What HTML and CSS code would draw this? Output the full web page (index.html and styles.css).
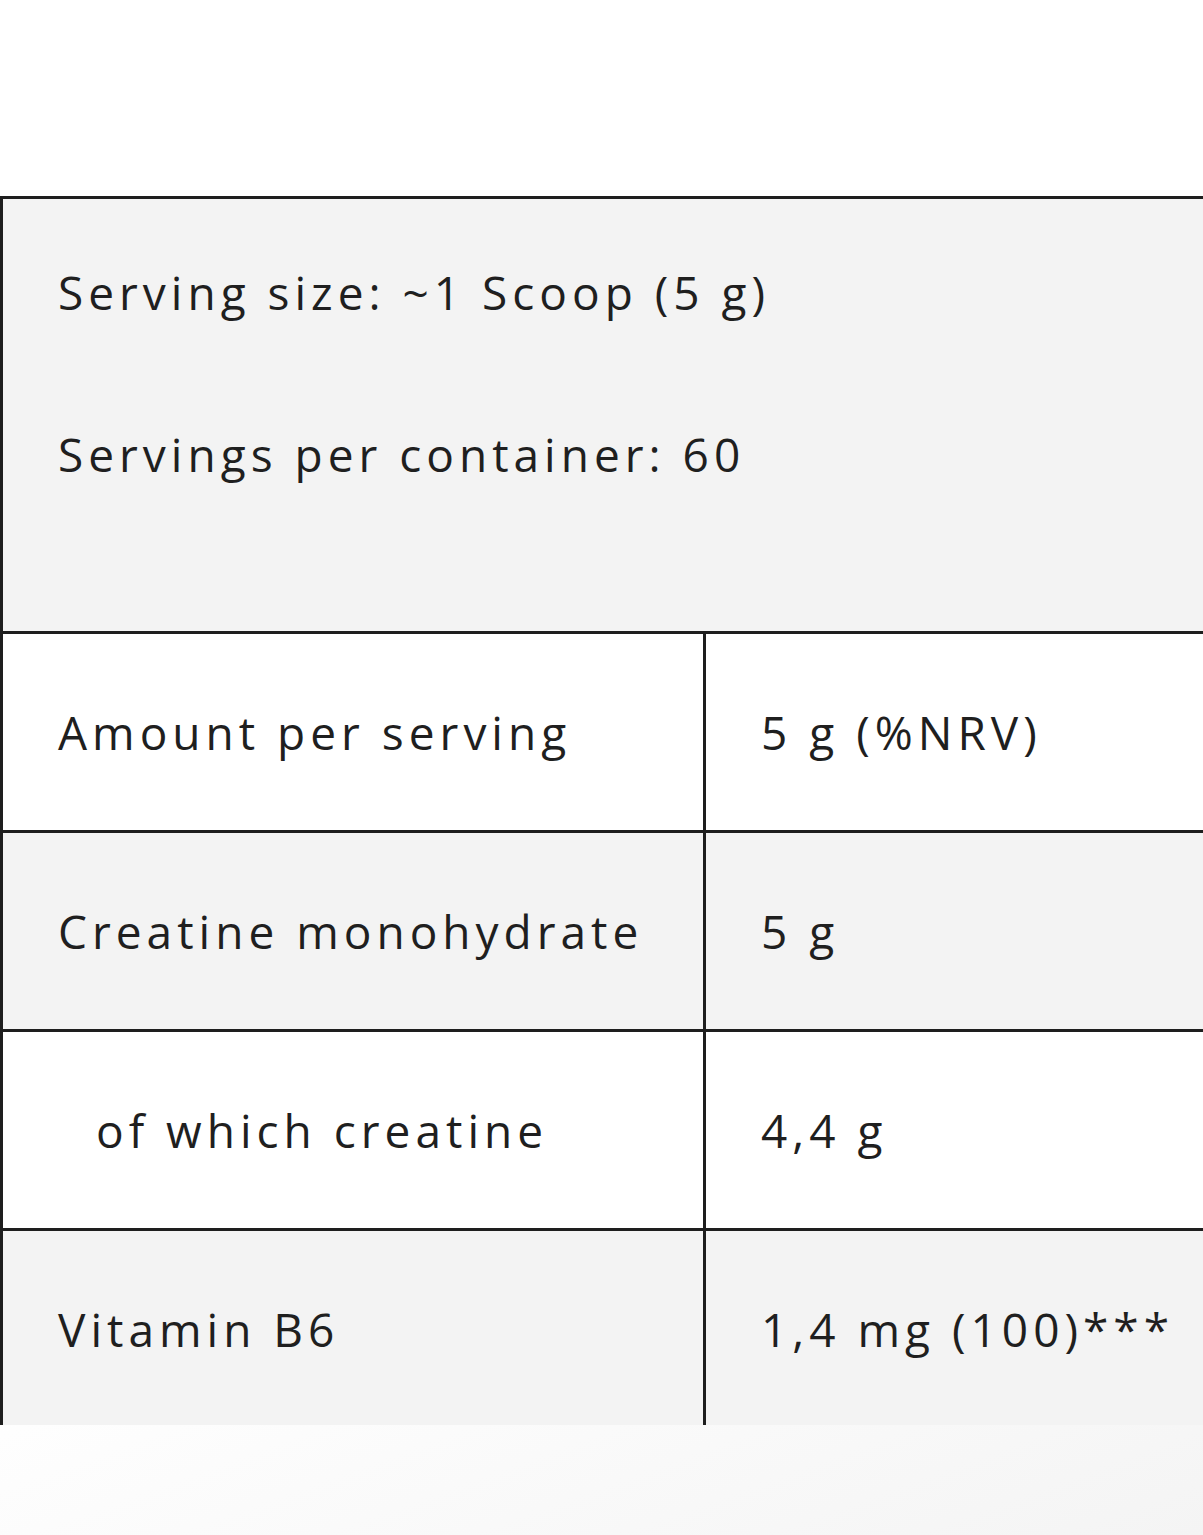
FILE: index.html
```html
<!DOCTYPE html>
<html>
<head>
<meta charset="utf-8">
<link rel="stylesheet" href="styles.css">
</head>
<body>
<div class="page">
  <div class="clip">
    <table class="facts">
      <colgroup><col class="c1"><col class="c2"></colgroup>
      <tr class="head">
        <td colspan="2">
          <p>Serving size: ~1 Scoop (5 g)</p>
          <p>Servings per container: 60</p>
        </td>
      </tr>
      <tr class="row white">
        <td>Amount per serving</td>
        <td>5 g (%NRV)</td>
      </tr>
      <tr class="row grey">
        <td>Creatine monohydrate</td>
        <td>5 g</td>
      </tr>
      <tr class="row white">
        <td class="indent">of which creatine</td>
        <td>4,4 g</td>
      </tr>
      <tr class="row grey">
        <td>Vitamin B6</td>
        <td>1,4 mg (100)***</td>
      </tr>
    </table>
  </div>
</div>
</body>
</html>
```

FILE: styles.css
```css
html, body {
  margin: 0;
  padding: 0;
  background: #ffffff;
  overflow: hidden;
}
.page {
  width: 1203px;
  height: 1535px;
  padding-top: 196px;
  box-sizing: border-box;
  background: linear-gradient(160deg, #ffffff 70%, #f4f4f4 100%);
}
.clip {
  height: 1229px;
  width: 1203px;
  overflow: hidden;
}
.facts {
  border-collapse: collapse;
  width: 1240px;
  table-layout: fixed;
  font-family: "Open Sans", "Noto Sans", sans-serif;
  font-size: 46px;
  font-weight: 500;
  letter-spacing: 5px;
  color: #1f1f1f;
  border: 3px solid #1e1e1e;
}
.c1 { width: 703px; }
.facts td {
  border: 3px solid #1e1e1e;
  padding: 0 0 0 55px;
  vertical-align: middle;
  white-space: nowrap;
}
.head td {
  background: #f3f3f3;
  height: 372px;
  vertical-align: top;
  padding-top: 60px;
}
.head p {
  margin: 0 0 96px 0;
  line-height: 66px;
}
.head p:last-child { margin-bottom: 0; }
.row td { height: 196px; }
.white td { background: #ffffff; }
.grey td { background: #f3f3f3; }
.facts td.indent { padding-left: 93px; }
```
